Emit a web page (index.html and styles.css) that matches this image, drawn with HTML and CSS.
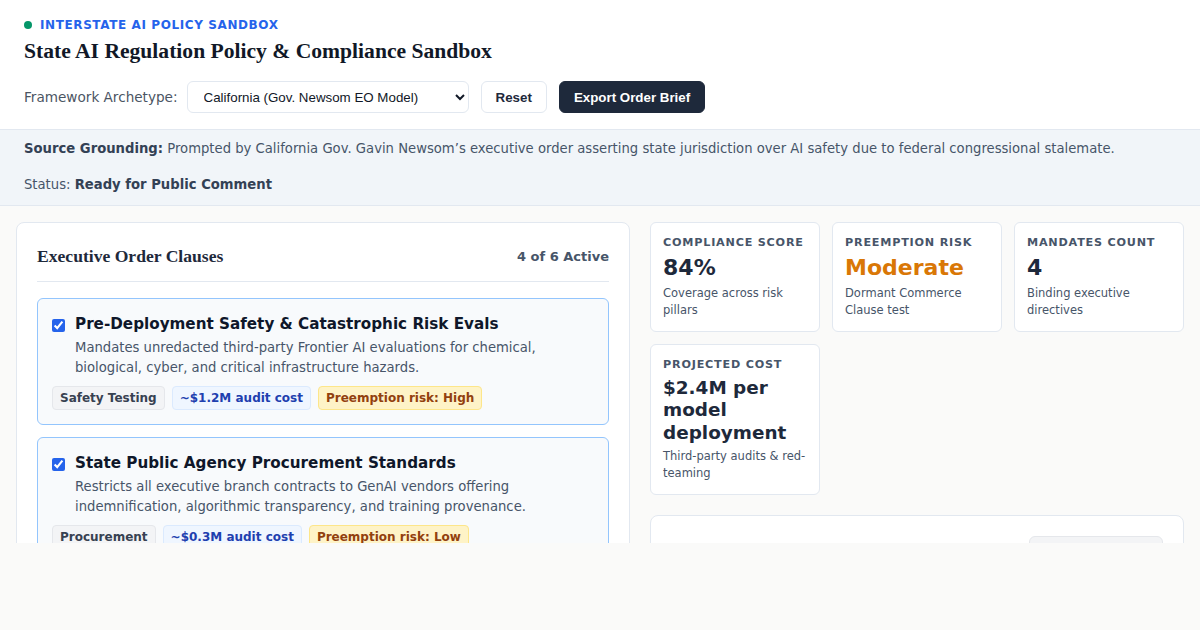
FILE: index.html
```html
<!DOCTYPE html>
<html lang="en">
<head>
  <meta charset="UTF-8">
  <meta name="viewport" content="width=device-width, initial-scale=1.0">
  <title>State AI Regulation Policy &amp; Compliance Sandbox</title>
  <link rel="stylesheet" href="styles.css">
</head>
<body>
  <header class="top">
    <div class="kicker"><span class="dot"></span>Interstate AI Policy Sandbox</div>
    <h1>State AI Regulation Policy &amp; Compliance Sandbox</h1>
    <div class="controls">
      <label for="archetype">Framework Archetype:</label>
      <select id="archetype">
        <option>California (Gov. Newsom EO Model)</option>
        <option>New York (RAISE Act Model)</option>
        <option>Colorado (AI Act Model)</option>
        <option>Texas (TRAIGA Model)</option>
      </select>
      <button class="btn">Reset</button>
      <button class="btn btn-dark">Export Order Brief</button>
    </div>
  </header>

  <section class="grounding">
    <p><strong>Source Grounding:</strong> Prompted by California Gov. Gavin Newsom’s executive order asserting state jurisdiction over AI safety due to federal congressional stalemate.</p>
    <p>Status: <strong>Ready for Public Comment</strong></p>
  </section>

  <main class="workspace">
    <div class="card clauses">
      <div class="card-head">
        <h2>Executive Order Clauses</h2>
        <span class="count">4 of 6 Active</span>
      </div>

      <div class="clause">
        <div class="clause-row">
          <input type="checkbox" id="c1" checked>
          <div>
            <label for="c1" class="clause-title">Pre-Deployment Safety &amp; Catastrophic Risk Evals</label>
            <p class="clause-desc">Mandates unredacted third-party Frontier AI evaluations for chemical, biological, cyber, and critical infrastructure hazards.</p>
          </div>
        </div>
        <div class="tags">
          <span class="tag">Safety Testing</span>
          <span class="tag tag-cost">~$1.2M audit cost</span>
          <span class="tag tag-risk">Preemption risk: High</span>
        </div>
      </div>

      <div class="clause">
        <div class="clause-row">
          <input type="checkbox" id="c2" checked>
          <div>
            <label for="c2" class="clause-title">State Public Agency Procurement Standards</label>
            <p class="clause-desc">Restricts all executive branch contracts to GenAI vendors offering indemnification, algorithmic transparency, and training provenance.</p>
          </div>
        </div>
        <div class="tags">
          <span class="tag">Procurement</span>
          <span class="tag tag-cost">~$0.3M audit cost</span>
          <span class="tag tag-risk">Preemption risk: Low</span>
        </div>
      </div>

      <div class="clause">
        <div class="clause-row">
          <input type="checkbox" id="c3" checked>
          <div>
            <label for="c3" class="clause-title">Watermarking &amp; Synthetic Content Disclosure</label>
            <p class="clause-desc">Requires provenance metadata on all state-distributed generative media.</p>
          </div>
        </div>
      </div>
    </div>

    <div class="side">
      <div class="stats">
        <div class="stat">
          <div class="stat-label">Compliance Score</div>
          <div class="stat-value">84%</div>
          <div class="stat-sub">Coverage across risk pillars</div>
        </div>
        <div class="stat">
          <div class="stat-label">Preemption Risk</div>
          <div class="stat-value warn">Moderate</div>
          <div class="stat-sub">Dormant Commerce Clause test</div>
        </div>
        <div class="stat">
          <div class="stat-label">Mandates Count</div>
          <div class="stat-value">4</div>
          <div class="stat-sub">Binding executive directives</div>
        </div>
        <div class="stat">
          <div class="stat-label">Projected Cost</div>
          <div class="stat-value long">$2.4M per model deployment</div>
          <div class="stat-sub">Third-party audits &amp; red-teaming</div>
        </div>
      </div>

      <div class="card pillars">
        <div class="card-head plain">
          <h2>Risk Pillar Coverage</h2>
          <button class="btn btn-soft">Legal Review</button>
        </div>
      </div>
    </div>
  </main>
</body>
</html>
```

FILE: styles.css
```css
/* Base */
* {
  box-sizing: border-box;
}

body {
  margin: 0;
  background: #fafaf9;
  color: #1e293b;
  font-family: "DejaVu Sans", "Noto Sans", sans-serif;
}

/* Header */
.top {
  background: #fff;
  padding: 17px 24px 16px;
}

.kicker {
  display: flex;
  align-items: center;
  gap: 8px;
  font-size: 12px;
  line-height: 16px;
  font-weight: bold;
  letter-spacing: 0.05em;
  text-transform: uppercase;
  color: #2563eb;
}

.dot {
  width: 8px;
  height: 8px;
  border-radius: 50%;
  background: #059669;
}

h1 {
  margin: 4px 0 0;
  font-family: "Liberation Serif", "Times New Roman", serif;
  font-size: 21.6px;
  line-height: 28px;
  color: #111827;
}

.controls {
  display: flex;
  align-items: center;
  gap: 12px;
  margin-top: 16px;
}

.controls label {
  font-size: 13.6px;
  color: #4b5563;
  margin-right: -3px;
}

select {
  width: 282px;
  height: 32px;
  padding: 0 10px 0 12px;
  border: 1px solid #e2e8f0;
  border-radius: 6px;
  background: #fff;
  color: #111827;
  font-family: "Liberation Sans", Arial, sans-serif;
  font-size: 13.333px;
}

.btn {
  height: 32px;
  padding: 0 14px;
  border: 1px solid #e2e8f0;
  border-radius: 6px;
  background: #fff;
  color: #1e293b;
  font-family: "Liberation Sans", Arial, sans-serif;
  font-size: 13.333px;
  font-weight: bold;
  white-space: nowrap;
  cursor: pointer;
}

.btn-dark {
  background: #1e293b;
  border-color: #1e293b;
  color: #fff;
}

.btn-soft {
  background: #f3f4f6;
  border-color: #e5e7eb;
  color: #374151;
  width: 134px;
}

/* Source band */
.grounding {
  background: #f1f5f9;
  border-top: 1px solid #e2e8f0;
  border-bottom: 1px solid #e2e8f0;
  padding: 9px 24px 10px;
  display: flex;
  flex-direction: column;
  gap: 16px;
  font-size: 13.2px;
  line-height: 20px;
  color: #475569;
}

.grounding p {
  margin: 0;
}

.grounding strong {
  color: #334155;
}

/* Workspace */
.workspace {
  display: grid;
  grid-template-columns: minmax(0, 1.15fr) minmax(0, 1fr);
  gap: 20px;
  align-items: start;
  padding: 16px;
  height: 337px;
  overflow: hidden;
}

.card {
  background: #fff;
  border: 1px solid #e2e8f0;
  border-radius: 8px;
  padding: 20px;
}

.card-head {
  display: flex;
  align-items: center;
  justify-content: space-between;
  padding-bottom: 12px;
  border-bottom: 1px solid #e2e8f0;
  margin-bottom: 16px;
}

.card-head.plain {
  border-bottom: none;
}

h2 {
  margin: 0;
  font-family: "Liberation Serif", "Times New Roman", serif;
  font-size: 17.6px;
  line-height: 26px;
  font-weight: bold;
  color: #1e293b;
}

.count {
  font-size: 13px;
  font-weight: bold;
  color: #475569;
}

/* Clauses */
.clause {
  background: #f8fafc;
  border: 1px solid #93c5fd;
  border-radius: 6px;
  padding: 14px;
  margin-bottom: 12px;
}

.clause-row {
  display: flex;
  gap: 10px;
  align-items: flex-start;
}

.clause-row input {
  margin: 6px 0 0;
  width: 13px;
  height: 13px;
  accent-color: #2563eb;
  flex-shrink: 0;
}

.clause-title {
  display: block;
  font-size: 15.2px;
  line-height: 22px;
  font-weight: bold;
  color: #0f172a;
}

.clause-desc {
  margin: 3px 0 0;
  font-size: 13.2px;
  line-height: 19.5px;
  color: #475569;
}

.tags {
  display: flex;
  flex-wrap: wrap;
  gap: 7px;
  margin-top: 9px;
}

.tag {
  font-size: 12px;
  line-height: 16px;
  font-weight: bold;
  padding: 3px 7px;
  border: 1px solid #e5e7eb;
  border-radius: 4px;
  background: #f3f4f6;
  color: #374151;
}

.tag-cost {
  background: #eff6ff;
  border-color: #dbeafe;
  color: #1e40af;
}

.tag-risk {
  background: #fef3c7;
  border-color: #fde68a;
  color: #92400e;
}

/* Stats */
.stats {
  display: grid;
  grid-template-columns: repeat(3, minmax(0, 1fr));
  gap: 12px;
  align-items: start;
}

.stat {
  background: #fff;
  border: 1px solid #e2e8f0;
  border-radius: 6px;
  padding: 12px;
}

.stat-label {
  font-size: 11.2px;
  line-height: 16px;
  font-weight: bold;
  letter-spacing: 0.07em;
  text-transform: uppercase;
  color: #475569;
}

.stat-value {
  margin-top: 4px;
  font-size: 22px;
  line-height: 1.2;
  font-weight: bold;
  color: #1e293b;
}

.stat-value.long {
  font-size: 18.4px;
}

.stat-value.warn {
  color: #d97706;
}

.stat-sub {
  margin-top: 4px;
  font-size: 11.5px;
  line-height: 17px;
  color: #475569;
}

.pillars {
  margin-top: 20px;
}
```
